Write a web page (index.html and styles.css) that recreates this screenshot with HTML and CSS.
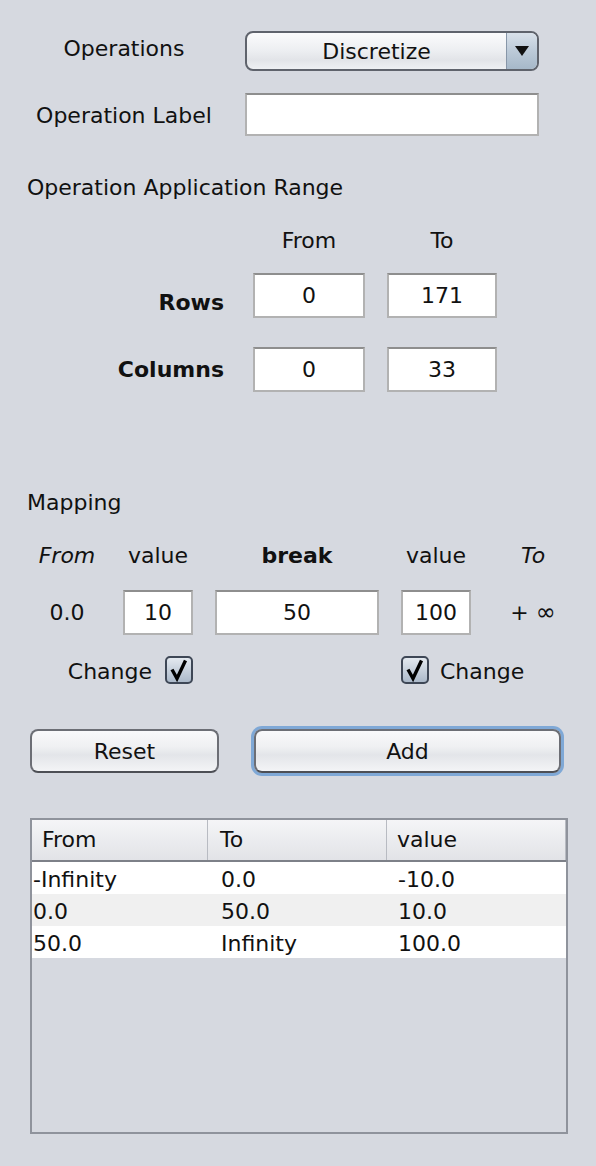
FILE: index.html
```html
<!DOCTYPE html>
<html>
<head>
<meta charset="utf-8">
<link rel="stylesheet" href="styles.css">
</head>
<body>
<div class="panel">
  <div class="op-row first">
    <div class="op-label">Operations</div>
    <div class="combo">
      <div class="combo-text">Discretize</div>
      <div class="combo-arrow"><svg width="16" height="12" viewBox="0 0 16 12"><polygon points="1,1 15,1 8,11" fill="#111"/></svg></div>
    </div>
  </div>
  <div class="op-row second">
    <div class="op-label">Operation Label</div>
    <div class="field wide"></div>
  </div>

  <div class="section-title range-title">Operation Application Range</div>
  <div class="range-row head">
    <div class="range-label"></div>
    <div class="range-col a">From</div>
    <div class="range-col b">To</div>
  </div>
  <div class="range-row r1">
    <div class="range-label low">Rows</div>
    <div class="field a">0</div>
    <div class="field b">171</div>
  </div>
  <div class="range-row r2">
    <div class="range-label">Columns</div>
    <div class="field a">0</div>
    <div class="field b">33</div>
  </div>

  <div class="section-title mapping-title">Mapping</div>
  <div class="mapping">
    <div class="mh italic">From</div>
    <div class="mh">value</div>
    <div class="mh bold">break</div>
    <div class="mh">value</div>
    <div class="mh italic">To</div>

    <div class="mv">0.0</div>
    <div class="field">10</div>
    <div class="field">50</div>
    <div class="field">100</div>
    <div class="mv">+ <span class="inf">∞</span></div>

    <div class="change left">
      <span>Change</span>
      <svg class="cb" width="28" height="28" viewBox="0 0 28 28"><defs><linearGradient id="g1" x1="0" y1="0" x2="0" y2="1"><stop offset="0" stop-color="#e6ebf1"/><stop offset="1" stop-color="#a9b7c8"/></linearGradient></defs><rect x="1" y="1" width="26" height="26" rx="4" fill="url(#g1)" stroke="#3e4756" stroke-width="2"/><polyline points="7,13.5 12,22.5 20.5,4.5" fill="none" stroke="#000" stroke-width="3.4" stroke-linejoin="miter"/></svg>
    </div>
    <div class="change right">
      <svg class="cb" width="28" height="28" viewBox="0 0 28 28"><defs><linearGradient id="g2" x1="0" y1="0" x2="0" y2="1"><stop offset="0" stop-color="#e6ebf1"/><stop offset="1" stop-color="#a9b7c8"/></linearGradient></defs><rect x="1" y="1" width="26" height="26" rx="4" fill="url(#g2)" stroke="#3e4756" stroke-width="2"/><polyline points="7,13.5 12,22.5 20.5,4.5" fill="none" stroke="#000" stroke-width="3.4" stroke-linejoin="miter"/></svg>
      <span>Change</span>
    </div>
  </div>

  <div class="buttons">
    <div class="btn reset">Reset</div>
    <div class="btn add">Add</div>
  </div>

  <div class="table">
    <div class="thead">
      <div class="th c1">From</div>
      <div class="th c2">To</div>
      <div class="th c3">value</div>
    </div>
    <div class="tr">
      <div class="td c1">-Infinity</div>
      <div class="td c2">0.0</div>
      <div class="td c3">-10.0</div>
    </div>
    <div class="tr alt">
      <div class="td c1">0.0</div>
      <div class="td c2">50.0</div>
      <div class="td c3">10.0</div>
    </div>
    <div class="tr">
      <div class="td c1">50.0</div>
      <div class="td c2">Infinity</div>
      <div class="td c3">100.0</div>
    </div>
  </div>
</div>
</body>
</html>
```
FILE: styles.css
```css
html, body {
  margin: 0;
  padding: 0;
  background: #d6d9e0;
}
body {
  font-family: "DejaVu Sans", "Liberation Sans", sans-serif;
  font-size: 22px;
  color: #111;
  width: 596px;
  height: 1166px;
  overflow: hidden;
}
.panel {
  padding-top: 31px;
}
.op-row {
  display: flex;
  align-items: center;
}
.op-row.first { height: 40px; }
.op-row.second { height: 43px; margin-top: 22px; }
.op-label {
  width: 208px;
  padding-left: 20px;
  margin-right: 17px;
  text-align: center;
  line-height: 26px;
}
.op-row.first .op-label { position: relative; top: -2px; }
.op-row.second .op-label { position: relative; top: 1px; }

.combo {
  box-sizing: border-box;
  width: 294px;
  height: 40px;
  border: 2px solid #5f636c;
  border-radius: 8px;
  display: flex;
  overflow: hidden;
  background: linear-gradient(#fbfbfc 0%, #eceef1 50%, #e2e4e8 75%, #eef0f3 100%);
}
.combo-text {
  flex: 1;
  text-align: center;
  line-height: 38px;
}
.combo-arrow {
  width: 30px;
  border-left: 1px solid #8796a8;
  background: linear-gradient(#d9e1ea 0%, #bccad8 50%, #a6b8c9 100%);
  display: flex;
  align-items: center;
  justify-content: center;
}

.field {
  box-sizing: border-box;
  background: #fff;
  border: 2px solid #b2b2b2;
  border-top-color: #8e8e8e;
  text-align: center;
  line-height: 41px;
  height: 45px;
}
.field.wide {
  width: 294px;
  height: 43px;
}

.section-title {
  padding-left: 27px;
  line-height: 26px;
}
.range-title { margin-top: 39px; }

.range-row {
  display: flex;
  align-items: center;
}
.range-row.head { margin-top: 26px; height: 26px; }
.range-row.r1 { margin-top: 20px; height: 45px; }
.range-row.r2 { margin-top: 29px; height: 45px; }
.range-label {
  width: 224px;
  margin-right: 29px;
  text-align: right;
  font-weight: bold;
}
.range-label.low { position: relative; top: 7px; }
.range-col, .range-row .field { text-align: center; }
.range-row .a { width: 112px; margin-right: 22px; }
.range-row .b { width: 110px; }

.mapping-title { margin-top: 98px; }

.mapping {
  display: grid;
  grid-template-columns: 68px 70px 164px 70px 80px;
  grid-template-rows: 26px 45px 28px;
  column-gap: 22px;
  row-gap: 21px;
  padding-left: 33px;
  margin-top: 27px;
  align-items: center;
}
.mh, .mv { text-align: center; line-height: 26px; }
.inf { font-size: 24px; }
.italic { font-style: italic; }
.bold { font-weight: bold; }
.change {
  display: flex;
  align-items: center;
  height: 28px;
}
.change.left {
  grid-column: 1 / 3;
  justify-content: flex-end;
  gap: 13px;
}
.change.right {
  grid-column: 4 / 6;
  gap: 11px;
}
.change span { position: relative; top: 1px; }
.cb { display: block; }

.buttons {
  display: flex;
  margin-top: 45px;
  padding-left: 30px;
  height: 44px;
}
.btn {
  box-sizing: border-box;
  height: 44px;
  border: 2px solid #6c6e75;
  border-bottom-color: #4d4f55;
  border-radius: 8px;
  background: linear-gradient(#f9f9fb 0%, #eff0f2 40%, #e3e5e9 60%, #f3f4f6 100%);
  text-align: center;
  line-height: 42px;
}
.btn.reset { width: 189px; }
.btn.add {
  width: 307px;
  margin-left: 35px;
  box-shadow: 0 0 0 3px #7fa8d6;
}

.table {
  box-sizing: border-box;
  margin-top: 45px;
  margin-left: 30px;
  width: 538px;
  height: 316px;
  border: 2px solid #8f939c;
}
.thead {
  display: flex;
  height: 42px;
  box-sizing: border-box;
  border-bottom: 2px solid #7d8088;
  background: linear-gradient(#f5f5f7 0%, #ebecef 50%, #e2e3e7 100%);
}
.th {
  box-sizing: border-box;
  line-height: 39px;
  border-right: 1px solid #b8bbc2;
}
.c1 { width: 176px; }
.c2 { width: 179px; }
.c3 { width: 179px; }
.th.c1 { padding-left: 10px; }
.th.c2 { padding-left: 12px; }
.th.c3 { padding-left: 10px; }
.tr {
  display: flex;
  height: 32px;
  background: #fff;
}
.tr.alt { background: #f0f0f0; }
.td {
  box-sizing: border-box;
  line-height: 32px;
  position: relative;
  top: 2px;
}
.td.c1 { padding-left: 1px; }
.td.c2 { padding-left: 13px; }
.td.c3 { padding-left: 11px; }
```
